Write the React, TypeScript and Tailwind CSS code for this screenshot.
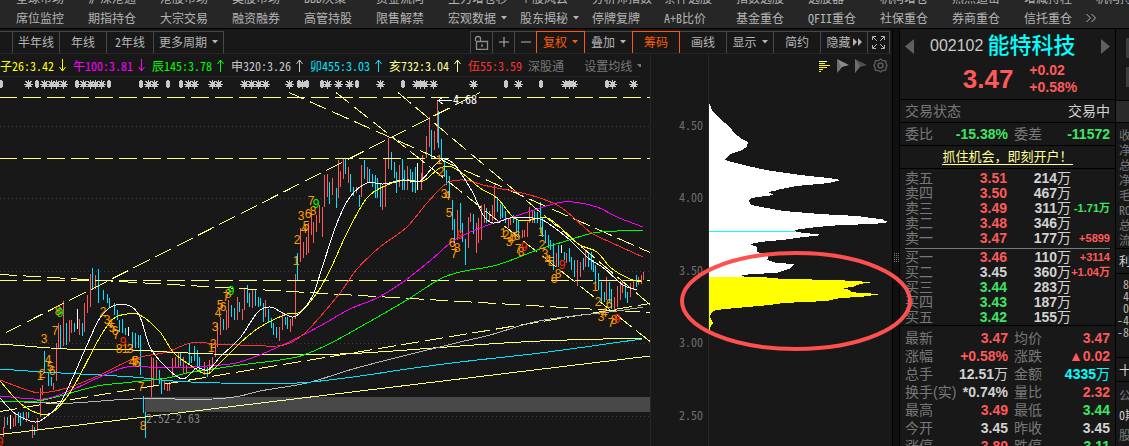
import React from 'react';
import { Plus, Minus } from 'lucide-react';

const menuTop = [
  '全球市场', '沪深港通', '港股市场', '美股市场', 'BBD决策', '资金流向', '主力增仓秒', '个股风云',
  '分析师指数', '条件选股', '指数选股', '选股器', '机构增仓', '热点追击', '增减持柱', '机构持仓',
];

const menuMain: { label: string; drop?: boolean }[] = [
  { label: '席位监控' }, { label: '期指持仓' }, { label: '大宗交易' }, { label: '融资融券' },
  { label: '高管持股' }, { label: '限售解禁' }, { label: '宏观数据', drop: true }, { label: '股东揭秘', drop: true },
  { label: '停牌复牌' }, { label: 'A+B比价' }, { label: '基金重仓' }, { label: 'QFII重仓' },
  { label: '社保重仓' }, { label: '券商重仓' }, { label: '信托重仓' },
];

const averages = [
  { label: '子26:3.42', dir: 'down', cls: 'text-[#ffff00]' },
  { label: '午100:3.81', dir: 'down', cls: 'text-[#ff00ff]' },
  { label: '辰145:3.78', dir: 'up', cls: 'text-[#00ff00]' },
  { label: '申320:3.26', dir: 'up', cls: 'text-[#c8c8c8]' },
  { label: '卯455:3.03', dir: 'up', cls: 'text-[#00e5ff]' },
  { label: '亥732:3.04', dir: 'up', cls: 'text-[#ffff96]' },
];

const RED = 'text-[#ff5a5a]';
const GREEN = 'text-[#3ce664]';
const PLAIN = 'text-[#d2d2d2]';
const CYAN = 'text-[#00ffff]';

const sells = [
  { name: '卖五', price: '3.51', cls: RED, vol: '214' },
  { name: '卖四', price: '3.50', cls: RED, vol: '467' },
  { name: '卖三', price: '3.49', cls: RED, vol: '311', delta: '-1.71万', dcls: GREEN },
  { name: '卖二', price: '3.48', cls: RED, vol: '346' },
  { name: '卖一', price: '3.47', cls: RED, vol: '177', delta: '+5899', dcls: RED },
];

const buys = [
  { name: '买一', price: '3.46', cls: RED, vol: '110', delta: '+3114', dcls: RED },
  { name: '买二', price: '3.45', cls: PLAIN, vol: '360', delta: '+1.04万', dcls: RED },
  { name: '买三', price: '3.44', cls: GREEN, vol: '283' },
  { name: '买四', price: '3.43', cls: GREEN, vol: '187' },
  { name: '买五', price: '3.42', cls: GREEN, vol: '155' },
];

const stats = [
  ['最新', '3.47', RED, '均价', '3.47', RED],
  ['涨幅', '+0.58%', RED, '涨跌', '▲0.02', RED],
  ['总手', '12.51万', PLAIN, '金额', '4335万', CYAN],
  ['换手(实)', '*0.74%', PLAIN, '量比', '2.32', RED],
  ['最高', '3.49', RED, '最低', '3.44', GREEN],
  ['今开', '3.45', PLAIN, '昨收', '3.45', PLAIN],
  ['涨停', '3.80', RED, '跌停', '3.11', GREEN],
];

// x, high, low
const risingBars = [
  [3, 427, 437], [4, 417, 428], [13, 418, 427], [15, 413, 426], [26, 412, 422], [32, 425, 438], [37, 418, 431],
  [40, 388, 417], [42, 385, 395], [53, 383, 390], [56, 343, 381], [58, 323, 348], [63, 301, 346], [69, 320, 342],
  [71, 320, 333], [79, 319, 335], [84, 303, 332], [87, 295, 313], [90, 274, 307], [95, 275, 289], [151, 357, 397],
  [153, 358, 387], [156, 360, 380], [164, 381, 390], [167, 383, 391], [169, 382, 391], [172, 358, 377],
  [175, 357, 368], [178, 352, 367], [183, 357, 373], [186, 365, 373], [204, 362, 375], [209, 360, 372],
  [212, 357, 370], [215, 343, 357], [217, 323, 347], [220, 317, 335], [226, 310, 330], [228, 300, 328],
  [237, 297, 320], [242, 309, 320], [244, 288, 310], [252, 290, 308], [265, 300, 317], [279, 327, 341],
  [282, 312, 330], [290, 319, 332], [292, 317, 326], [295, 274, 319], [300, 228, 262], [303, 242, 258],
  [306, 237, 255], [308, 223, 253], [311, 213, 235], [313, 222, 243], [316, 215, 232], [319, 205, 223],
  [322, 207, 237], [324, 175, 207], [327, 174, 197], [332, 178, 195], [338, 160, 198], [340, 171, 187],
  [343, 158, 179], [348, 167, 183], [356, 187, 193], [361, 165, 197], [367, 167, 183], [382, 187, 210],
  [385, 158, 207], [388, 138, 169], [399, 165, 187], [407, 166, 190], [421, 173, 190], [422, 155, 182],
  [426, 136, 158], [429, 117, 147], [434, 131, 150], [437, 100, 143], [457, 210, 240], [468, 217, 248],
  [470, 213, 222], [476, 223, 253], [478, 218, 243], [481, 205, 240], [484, 204, 223], [489, 211, 222],
  [492, 205, 221], [494, 185, 218], [508, 218, 228], [510, 217, 225], [522, 230, 238], [524, 230, 237],
  [527, 222, 237], [529, 207, 223], [532, 210, 223], [556, 253, 267], [566, 253, 263], [577, 260, 286],
  [580, 262, 277], [585, 250, 267], [606, 277, 300], [614, 297, 310], [617, 286, 307], [620, 281, 300],
  [622, 280, 293], [630, 283, 297], [633, 280, 290], [638, 277, 285], [641, 275, 284], [643, 272, 280],
];

const fallingBars = [
  [7, 417, 425], [18, 412, 423], [20, 413, 426], [23, 412, 420], [28, 412, 418], [34, 427, 435], [44, 351, 370],
  [48, 373, 386], [51, 377, 386], [60, 325, 348], [66, 323, 345], [74, 323, 332], [82, 323, 336], [92, 268, 290],
  [98, 269, 303], [103, 290, 300], [107, 294, 303], [109, 298, 307], [114, 303, 315], [117, 310, 320],
  [119, 320, 332], [122, 319, 333], [125, 328, 335], [132, 332, 348], [135, 333, 348], [138, 335, 348],
  [140, 335, 375], [143, 396, 413], [145, 412, 438], [159, 370, 384], [161, 380, 394], [180, 352, 366],
  [189, 343, 365], [191, 356, 363], [194, 346, 361], [197, 350, 367], [199, 357, 370], [207, 367, 377],
  [223, 319, 330], [231, 305, 317], [234, 308, 320], [239, 302, 312], [247, 285, 303], [249, 293, 307],
  [255, 290, 306], [258, 297, 307], [260, 298, 306], [263, 303, 322], [268, 309, 322], [271, 318, 328],
  [273, 323, 335], [276, 327, 338], [285, 317, 325], [287, 317, 329], [297, 253, 280], [329, 182, 204],
  [336, 188, 208], [345, 159, 174], [350, 174, 192], [353, 187, 196], [359, 195, 207], [364, 160, 179],
  [369, 169, 182], [372, 174, 187], [375, 175, 198], [377, 178, 198], [380, 183, 207], [391, 152, 170],
  [394, 162, 178], [396, 172, 193], [402, 159, 190], [404, 170, 190], [410, 169, 183], [412, 172, 192],
  [415, 167, 193], [431, 130, 158], [438, 111, 148], [441, 139, 158], [444, 158, 177], [446, 170, 185],
  [449, 176, 197], [452, 200, 230], [454, 219, 243], [460, 203, 233], [462, 223, 242], [465, 239, 265],
  [473, 214, 234], [486, 208, 223], [497, 197, 212], [500, 204, 219], [502, 205, 218], [505, 211, 223],
  [513, 215, 223], [516, 218, 233], [518, 220, 238], [534, 211, 223], [537, 212, 223], [540, 202, 233],
  [542, 217, 237], [545, 230, 243], [548, 235, 248], [550, 240, 250], [553, 243, 270], [558, 245, 267],
  [564, 252, 260], [569, 248, 262], [571, 257, 270], [574, 260, 277], [583, 258, 270], [588, 252, 267],
  [591, 252, 270], [593, 260, 272], [595, 265, 283], [598, 273, 290], [601, 282, 303], [604, 292, 302],
  [609, 282, 302], [611, 289, 309], [625, 285, 298], [627, 292, 303], [636, 275, 287],
];

const flatBars = [[10, 415, 429], [77, 309, 329], [128, 327, 336], [417, 163, 190], [561, 245, 253]];

const curves = [
  { color: '#ffff80', pts: '0,344 67,349 133,350 167,352 213,354 240,354 340,354 407,350 460,346 540,341 643,338' },
  { color: '#b4b4b4', pts: '0,401 50,403 73,403 133,399 213,399 240,396 260,391 307,383 353,369 403,356 460,342 490,335 530,323 557,318 617,311 643,307' },
  { color: '#00e5ff', pts: '0,369 43,372 133,377 173,381 220,383 297,383 353,377 407,369 460,362 540,353 642,339' },
  { color: '#00ff00', pts: '0,401 37,401 60,396 97,386 123,383 167,378 187,373 213,369 240,365 297,357 327,345 353,331 407,300 440,279 460,272 497,265 540,249 563,242 593,233 617,231 643,230' },
  { color: '#ff00ff', pts: '0,396 43,399 67,392 100,377 127,367 167,368 207,366 240,362 287,343 320,326 350,309 377,298 403,282 431,260 453,241 480,228 513,217 557,203 573,202 597,207 617,217 643,227' },
  { color: '#ff3232', pts: '0,380 27,390 40,393 67,388 100,375 133,359 167,352 187,344 200,342 213,344 240,345 277,346 290,343 307,331 340,293 357,269 380,247 407,227 427,203 447,183 460,180 470,181 483,185 530,195 557,205 573,217 590,232 610,242 643,257' },
  { color: '#ffff00', pts: '0,381 20,403 40,414 53,412 67,397 80,375 100,337 113,319 127,314 140,315 160,332 173,352 190,365 207,374 220,363 240,343 260,327 287,314 300,312 317,293 330,270 347,233 367,198 387,185 407,180 423,181 440,168 452,167 467,177 480,188 497,198 513,217 523,221 547,218 563,230 580,245 597,252 611,268 630,279 642,282' },
  { color: '#ffffff', pts: '0,398 13,412 30,421 40,421 60,403 73,377 87,345 100,318 113,306 130,306 140,317 150,347 167,368 183,379 197,368 208,370 220,357 240,338 258,312 270,307 283,313 293,317 303,310 313,295 322,268 337,223 350,197 367,183 383,184 403,180 420,181 433,167 443,159 453,163 460,172 473,193 483,215 493,223 510,218 533,218 543,220 570,240 587,257 605,269 623,285 637,290' },
];

const trendLines = [
  [0, 97, 650, 97], [0, 158, 650, 158], [0, 280, 650, 280], [6, 332, 480, 92], [289, 92, 650, 252],
  [336, 92, 650, 341], [398, 92, 650, 304], [0, 274, 650, 312], [0, 411, 650, 303],
];

// digit, center x, center y
const counts: [string, number, number][] = [
  ['8', 58, 311], ['7', 55, 331], ['3', 44, 339], ['4', 48, 360], ['5', 50, 367], ['6', 52, 371], ['1', 40, 376],
  ['2', 42, 374], ['2', 103, 312], ['3', 107, 320], ['4', 110, 324], ['5', 112, 328], ['6', 115, 331],
  ['7', 116, 335], ['8', 119, 349], ['1', 125, 349], ['3', 130, 349], ['4', 132, 362], ['5', 135, 361],
  ['6', 137, 363], ['7', 141, 387], ['8', 143, 426], ['1', 211, 348], ['2', 213, 344], ['3', 215, 327],
  ['4', 218, 313], ['5', 220, 305], ['6', 223, 307], ['7', 226, 297], ['8', 228, 294], ['1', 296, 261],
  ['2', 297, 240], ['3', 301, 216], ['4', 304, 229], ['5', 306, 226], ['6', 308, 214], ['7', 311, 201],
  ['8', 313, 211], ['1', 439, 160], ['2', 441, 172], ['3', 444, 194], ['4', 447, 196], ['5', 449, 213],
  ['6', 452, 243], ['7', 454, 254], ['8', 457, 248], ['1', 503, 233], ['2', 506, 235], ['3', 509, 242],
  ['4', 511, 239], ['5', 513, 237], ['6', 517, 236], ['7', 518, 249], ['8', 521, 252], ['1', 541, 232],
  ['2', 542, 245], ['3', 545, 254], ['4', 548, 260], ['5', 551, 262], ['6', 554, 279], ['8', 558, 274],
  ['1', 595, 287], ['2', 598, 302], ['3', 601, 317], ['4', 604, 313], ['6', 609, 304], ['7', 611, 323], ['8', 614, 320],
];
const greenNines = [[60, 313], [231, 291], [316, 204]];
const redNines = [[0, 442], [123, 342], [460, 235], [524, 247], [562, 265], [617, 319]];

const stars = [28, 44, 51, 56, 63, 83, 90, 95, 101, 148, 154, 188, 194, 212, 218, 244, 251, 258, 265, 289, 302, 327, 338, 349, 380, 416, 420, 424, 433, 473, 518, 565, 569, 573, 612, 633];
const ticks = [0, 36, 76, 108, 140, 167, 180, 298, 306, 321, 356, 402, 505, 540, 606];

const levels = [
  { y: 126, label: '4.50' },
  { y: 198, label: '4.00' },
  { y: 271, label: '3.50' },
  { y: 343, label: '3.00' },
  { y: 416, label: '2.50' },
];

const bars = (rows: number[][]) => rows.map(([x, h, l]) => `M${x} ${h}h1V${l}h-1z`).join('');

// Catmull-Rom through the points, written as cubic beziers
const smooth = (pts: string) => {
  const p = pts.split(' ').map((s) => s.split(',').map(Number));
  let d = `M${p[0][0]} ${p[0][1]}`;
  for (let i = 0; i < p.length - 1; i++) {
    const a = p[Math.max(0, i - 1)];
    const b = p[i];
    const c = p[i + 1];
    const e = p[Math.min(p.length - 1, i + 2)];
    const dx = (c[0] - b[0]) / 3;
    const s1 = (c[1] - a[1]) / (c[0] - a[0]);
    const s2 = (e[1] - b[1]) / (e[0] - b[0]);
    d += `C${b[0] + dx} ${b[1] + s1 * dx} ${c[0] - dx} ${c[1] - s2 * dx} ${c[0]} ${c[1]}`;
  }
  return d;
};

const Caret = () => (
  <svg width="6" height="4" viewBox="0 0 6 4" className="shrink-0"><path d="M0 0h6L3 3.5z" fill="currentColor" /></svg>
);

const Tool: React.FC<{ active?: boolean; label?: string; className: string; children?: React.ReactNode }> = ({ active, label, className, children }) => (
  <button
    aria-label={label}
    className={`relative -ml-px flex h-[23px] shrink-0 items-center justify-center gap-[5px] border whitespace-nowrap ${
      active ? 'z-10 border-[#ff5a00] text-[#ff5a00]' : 'border-[#484848] text-[#b4b4b4]'
    } ${className}`}
  >
    {children}
  </button>
);

const Toolbar = () => (
  <div className="flex h-[25px] shrink-0 items-center justify-between overflow-hidden border-b border-[#262626] pt-[2px]">
    <div className="flex">
      <Tool label="更多" className="w-[14px]" />
      <Tool className="w-[48px]">半年线</Tool>
      <Tool className="w-[48px]">年线</Tool>
      <Tool className="w-[48px]">2年线</Tool>
      <Tool className="w-[71px]">更多周期<Caret /></Tool>
    </div>
    <div className="mr-[2px] flex">
      <Tool label="锁定" className="w-[23px]">
        <svg width="15" height="15" viewBox="0 0 15 15" fill="none" stroke="#8c8c8c">
          <path d="M2.5 6.5h11v8h-11zM1.5 6V3.500q0-2 2.500-2t2.500 2V6M8 9v3" strokeWidth="1.300" />
        </svg>
      </Tool>
      <Tool label="放大" className="w-[23px]"><Plus size={16} strokeWidth={1.5} /></Tool>
      <Tool label="缩小" className="w-[23px]"><Minus size={16} strokeWidth={1.5} /></Tool>
      <Tool active className="w-[49px]">复权<Caret /></Tool>
      <Tool className="w-[49px]">叠加<Caret /></Tool>
      <Tool active className="w-[48px]">筹码</Tool>
      <Tool className="w-[48px]">画线</Tool>
      <Tool className="w-[48px]">显示<Caret /></Tool>
      <Tool className="w-[48px]">简约</Tool>
      <Tool className="w-[48px]">
        隐藏
        <svg width="9" height="8" viewBox="0 0 9 8" className="-ml-[3px]"><path d="M0 0l4 4-4 4zM5 0l4 4-4 4z" fill="currentColor" /></svg>
      </Tool>
      <Tool label="全屏" className="w-[23px]">
        <svg width="13" height="13" viewBox="0 0 13 13" fill="none" stroke="currentColor">
          <path d="M.5 4V.5H4M9 .5h3.500V4M12.500 9v3.500H9M4 12.500H.5V9M1 1l4 4M12 1L8 5M12 12L8 8M1 12l4-4" />
        </svg>
      </Tool>
    </div>
  </div>
);

const PriceChart = () => (
  <svg viewBox="0 77 650 369" preserveAspectRatio="xMaxYMin slice" className="block min-h-0 w-full flex-1" shapeRendering="crispEdges">
    <g fill="none" stroke="#3c3c3c" strokeDasharray="1 3">
      {levels.map((l) => <path key={l.y} d={`M0 ${l.y + 0.5}H650`} />)}
    </g>

    {/* Event markers */}
    <g stroke="#c8c8c8" fill="#c8c8c8">
      {stars.map((x) => (
        <path key={x} d={`M${x + 0.5} 80v9M${x - 4} 84.500h9M${x - 2.5} 81l6 6M${x - 2.5} 87l6-6M${x - 1} 82.500h3v4h-3z`} />
      ))}
      {ticks.map((x) => <path key={x} stroke="none" d={`M${x} 80h2l1 2v4l-1 2h-2l-1-2v-4z`} />)}
    </g>

    <path d={bars(risingBars)} fill="#ff5a5a" />
    <path d={bars(fallingBars)} fill="#00e5ff" />
    <path d={bars(flatBars)} fill="#fff" />

    <g stroke="#ffff80" fill="none" strokeDasharray="18 6" strokeDashoffset="1">
      {trendLines.map(([x1, y1, x2, y2]) => (
        <path key={`${x1}-${y1}`} d={`M${x1} ${y1 + 0.5}L${x2} ${y2 + 0.5}`} />
      ))}
    </g>
    <path d="M0 434.500L650 356" stroke="#ffff80" />

    {curves.map((c) => (
      <path key={c.color} d={smooth(c.pts)} fill="none" stroke={c.color} />
    ))}

    <rect x="145" y="397" width="505" height="15" fill="#fff" fillOpacity=".21" />

    <g fontSize="12" textAnchor="middle" fontFamily="Liberation Sans, Arial, sans-serif">
      <g fill="#ff9c00">
        {counts.map(([n, x, y]) => <text key={`${x}-${y}`} x={x} y={y + 4}>{n}</text>)}
      </g>
      <g fill="#00ff00">
        {greenNines.map(([x, y]) => <text key={x} x={x} y={y + 4}>9</text>)}
      </g>
      <g fill="#ff2800">
        {redNines.map(([x, y]) => <text key={x} x={x} y={y + 4}>9</text>)}
      </g>
    </g>

    <path d="M438 100.500h14M443 97l-5 3.500 5 3.500" stroke="#fff" fill="none" />
    <text x="453" y="104" fontSize="12" fill="#fff">4.68</text>
    <text x="146" y="423" fontSize="12" fill="#828282">2.52-2.63</text>
  </svg>
);

const ChipChart = () => (
  <svg viewBox="709 77 183 369" preserveAspectRatio="xMinYMin slice" className="block min-h-0 w-full flex-1" shapeRendering="crispEdges">
    <path
      fill="#fff"
      d="M709 104h1l2 6 8 9 10 8 4 6 8 6 6 3-1 5-7 4-7 2-5 3-3 4 11 3 12 3 18 4 20 3 23 3 20 2 12 2-12 3-33 3-15 3-7 2-6 1 6 3-23 3-2 3 2 4 16 3 17 3 36 3 37 2 23 3 5 1-2 1 7 1-16 2-33 1-24 2-23 3 3 2 26 3-19 2-22 3-22 2-10 2 7 3v5l12 3-2 5 10 3 17 1-3 4-14 5-26 1-12 2 10 1H709z"
    />
    <path
      fill="#ffff00"
      d="M709 277h53l21 2 57 1 10 1 23 1-13 2-7 3-11 1 8 2 1 2 9 1 22 1-22 3-20 1-13 3-44 2-13 2-34 3-20 2-5 3-1 4 3 6-3 5-1 10h-1z"
    />
    <path d="M709 231.500h86" stroke="#00ffff" />
  </svg>
);

const ChipIcons = () => (
  <div className="flex h-[23px] shrink-0 items-center justify-end gap-[6px] pr-[4px]">
    <button aria-label="筹码分布">
      <svg width="12" height="12" viewBox="0 0 12 12" shapeRendering="crispEdges">
        <path d="M0 1h8" stroke="#fff" />
        <path d="M0 3.500h6M0 5.500h11M0 7.500h8M0 9.500h4M0 11.500h2" stroke="#ffff00" />
      </svg>
    </button>
    <button aria-label="远期筹码">
      <svg width="12" height="14" viewBox="0 0 12 14"><path d="M0 0l12 6-7 2-5 6 3-7z" fill="#8c8c8c" /><path d="M0 0v14l4-7z" fill="#6e6e6e" /></svg>
    </button>
    <button aria-label="近期筹码">
      <svg width="12" height="14" viewBox="0 0 12 14"><path d="M0 0l12 6-7 2-5 6z" fill="#505050" /><path d="M0 0v14l5-7z" fill="#6e6e6e" /></svg>
    </button>
    <button aria-label="设置">
      <svg width="15" height="15" viewBox="0 0 15 15" fill="none" stroke="#5a5a5a" strokeWidth="1.500">
        <path d="M7.500 1l2 1.500 3 .2.7 3L14 7.500l-.8 1.800-.7 3-3 .2-2 1.500-2-1.500-3-.2-.7-3L1 7.500l.8-1.800.7-3 3-.2z" strokeLinejoin="round" />
        <circle cx="7.500" cy="7.500" r="2.500" />
      </svg>
    </button>
  </div>
);

type Quote = { name: string; price: string; cls: string; vol: string; delta?: string; dcls?: string };

const Book: React.FC<{ rows: Quote[]; label: string }> = ({ rows, label }) => (
  <table aria-label={label} className="w-full table-fixed border-collapse text-right leading-[15px]">
    <tbody>
      {rows.map((r) => (
        <tr key={r.name} className="h-[15px]">
          <th scope="row" className="w-[44px] p-0 text-left font-normal text-[#787878]">{r.name}</th>
          <td className={`w-[58px] p-0 font-bold ${r.cls}`}>{r.price}</td>
          <td className="w-[64px] p-0 text-[#d2d2d2]"><b>{r.vol}</b>万</td>
          <td className={`p-0 text-[11px] font-bold whitespace-nowrap ${r.dcls ?? ''}`}>
            <span className="float-right">{r.delta}</span>
          </td>
        </tr>
      ))}
    </tbody>
  </table>
);

const Figure: React.FC<{ value: string }> = ({ value }) =>
  value.endsWith('万') ? <><b>{value.slice(0, -1)}</b>万</> : <b>{value}</b>;

const Pairs: React.FC<{ rows: string[][]; tall?: boolean; label: string }> = ({ rows, tall, label }) => (
  <table aria-label={label} className="w-full table-fixed border-collapse whitespace-nowrap leading-[18px]">
    <tbody>
      {rows.map(([a, av, ac, b, bv, bc]) => (
        <tr key={a} className={tall ? 'h-[22px]' : 'h-[18px]'}>
          <th scope="row" className="w-[48px] p-0 text-left font-normal text-[#787878]">{a}</th>
          <td className={`w-[55px] p-0 text-right ${ac}`}><Figure value={av} /></td>
          <th scope="row" className="w-[46px] p-0 pl-[6px] text-left font-normal text-[#787878]">{b}</th>
          <td className={`p-0 text-right ${bc}`}><Figure value={bv} /></td>
        </tr>
      ))}
    </tbody>
  </table>
);

const QuotePanel = () => (
  <aside className="w-[216px] shrink-0 overflow-hidden border-r border-black bg-[#181818] font-['Liberation_Sans','Noto_Sans_CJK_SC',sans-serif] text-[14px] [font-feature-settings:normal]">
    <div className="flex h-[71px] flex-col border-b border-black pt-[4px]">
      <div className="flex h-[26px] items-center px-[5px]">
        <button aria-label="上一只"><svg width="9" height="15" viewBox="0 0 9 15"><path d="M9 0v15L0 7.500z" fill="#5f5f5f" /></svg></button>
        <div className="flex flex-1 items-center gap-[4px] pl-[16px]">
          <span className="text-[16px] text-[#c8c8c8]">002102</span>
          <span className="text-[22px] leading-[26px] font-medium text-[#00ffff]">能特科技</span>
        </div>
        <button aria-label="下一只"><svg width="9" height="15" viewBox="0 0 9 15"><path d="M0 0v15l9-7.500z" fill="#5f5f5f" /></svg></button>
      </div>
      <div className={`flex flex-1 items-center justify-center gap-[16px] pl-[25px] font-bold ${RED}`}>
        <span className="text-[26px] leading-[30px]">3.47</span>
        <span className="flex flex-col leading-[17px]"><span>+0.02</span><span>+0.58%</span></span>
      </div>
    </div>
    <div className="flex h-[23px] items-center justify-between border-b border-black px-[5px]">
      <span className="text-[#787878]">交易状态</span>
      <span className="text-[#d2d2d2]">交易中</span>
    </div>
    <div className="border-b border-black px-[5px]">
      <Pairs label="委托" tall rows={[['委比', '-15.38%', GREEN, '委差', '-11572', GREEN]]} />
    </div>
    <div className="flex h-[23px] items-center justify-center border-b border-black">
      <a href="#open" className="border-b border-[#ffff96] text-[13px] leading-[15px] text-[#ffff96]">抓住机会，即刻开户！</a>
    </div>
    <div className="border-b border-black px-[5px] pt-[2px]">
      <Book label="卖盘" rows={sells} />
      <hr className="mt-[2px] mb-px border-[#787878]" />
      <Book label="买盘" rows={buys} />
    </div>
    <div className="px-[5px] pt-[3px]">
      <Pairs label="行情" rows={stats} />
    </div>
  </aside>
);

const SideStrip = () => (
  <div className="flex w-[13px] shrink-0 flex-col overflow-hidden bg-[#181818] text-[12px] leading-[15px] whitespace-nowrap text-[#787878]">
    <div className="flex h-[72px] shrink-0 flex-col items-end gap-[9px] border-b border-black pt-[9px]">
      <span className="h-5 w-[3px] bg-[#3c3c3c]" />
      <span className="h-5 w-[3px] bg-[#3c3c3c]" />
    </div>
    <div className="h-[22px] shrink-0 border-b border-black bg-[#2a2a2a]" />
    <div className="h-[126px] shrink-0 border-b border-black pt-[4px] pl-[3px]">
      {['收益', '净资', '总股', '净利', '毛利', 'ROE', '总值', '流通'].map((t) => <div key={t}>{t}</div>)}
    </div>
    <div className="h-[25px] shrink-0 border-b border-black pt-[4px] pl-[3px] text-[#d2d2d2]">利润</div>
    <div className="h-[84px] shrink-0 border-b border-black pt-[4px] text-right leading-[12px] text-[#b4b4b4]">
      {['8', '4', '0', '-4', '-8'].map((t) => <div key={t}>{t}</div>)}
    </div>
    <div className="h-[24px] shrink-0 border-b border-black pt-[4px] pl-[3px] text-[#d2d2d2]">十大</div>
    <div className="pt-[3px] pl-[3px] leading-[20px]">
      <div>公告</div>
      <div className="text-[#d2d2d2]">0期</div>
      <div>股东</div>
    </div>
  </div>
);

export default function App() {
  return (
    <div className="relative flex h-screen flex-col overflow-hidden bg-[#181818] font-['Noto_Sans_CJK_SC',sans-serif] text-[12px] leading-[16px] [font-feature-settings:'hwid']">
      {/* Menu */}
      <nav className="flex h-7 shrink-0 flex-col justify-end overflow-hidden bg-[#262626] text-[#b4b4b4]">
        <div className="flex h-5 shrink-0 pl-4">
          {menuTop.map((m) => <button key={m} className="w-[72px] shrink-0 text-left whitespace-nowrap">{m}</button>)}
        </div>
        <div className="flex h-5 shrink-0 pl-4">
          {menuMain.map((m) => (
            <button key={m.label} className="flex w-[72px] shrink-0 items-center gap-[5px] whitespace-nowrap last-of-type:w-[62px]">
              {m.label}
              {m.drop && <Caret />}
            </button>
          ))}
          <span className="flex items-center">
            <svg width="10" height="8" viewBox="0 0 10 8" fill="none" stroke="currentColor"><path d="M.5 0l4 4-4 4M5.500 0l4 4-4 4" /></svg>
          </span>
        </div>
      </nav>

      <div className="flex min-h-0 flex-1 border-t border-black">
        <main className="flex min-w-0 flex-1 flex-col">
          <Toolbar />
          <div className="flex min-h-0 flex-1">
            <section className="flex min-w-0 flex-1 flex-col">
              <div className="mr-[9px] flex h-[23px] shrink-0 items-center overflow-hidden border-b border-[#262626] pt-px whitespace-nowrap">
                {averages.map((a) => (
                  <span key={a.label} className={`flex shrink-0 items-center ${a.cls}`}>
                    {a.label}
                    <svg width="7" height="13" viewBox="0 0 7 13" fill="none" stroke="currentColor" className="mr-[7px] ml-[5px]">
                      <path d={a.dir === 'up' ? 'M3.500 13V1M.5 5l3-4 3 4' : 'M3.500 0v12M.5 8l3 4 3-4'} />
                    </svg>
                  </span>
                ))}
                <span className="text-[#ff3232]">伍55:3.59</span>
                <span className="ml-[6px] text-[#787878]">深股通</span>
                <button className="ml-5 flex shrink-0 items-center gap-[5px] text-[#787878]">设置均线<Caret /></button>
              </div>
              <PriceChart />
            </section>
            <div className="flex w-[58px] shrink-0 flex-col border-l border-[#262626] pt-[23px]">
              <svg viewBox="651 77 57 369" preserveAspectRatio="xMinYMin slice" className="block min-h-0 w-full flex-1">
                {levels.map((l) => <text key={l.y} x="679" y={l.y + 4} fontSize="12" fill="#6e6e6e">{l.label}</text>)}
              </svg>
            </div>
            <section className="flex w-[184px] shrink-0 flex-col border-l border-[#262626]">
              <ChipIcons />
              <ChipChart />
            </section>
          </div>
        </main>

        {/* Splitter */}
        <div className="flex w-2 shrink-0 items-center justify-center border-x border-black bg-[#101010] pt-[40px]">
          <svg width="5" height="9" viewBox="0 0 5 9"><path d="M.5 0v9M2.500 0v9M4.500 0v9" stroke="#787878" strokeDasharray="1 1" /></svg>
        </div>

        <QuotePanel />
        <SideStrip />
      </div>

      {/* Highlight over the chip distribution */}
      <svg width="232" height="100" viewBox="0 0 232 100" className="pointer-events-none absolute top-[251px] right-[217px] z-20">
        <ellipse cx="116" cy="50" rx="114" ry="48" fill="none" stroke="#ff5050" strokeWidth="4" />
      </svg>
    </div>
  );
}
